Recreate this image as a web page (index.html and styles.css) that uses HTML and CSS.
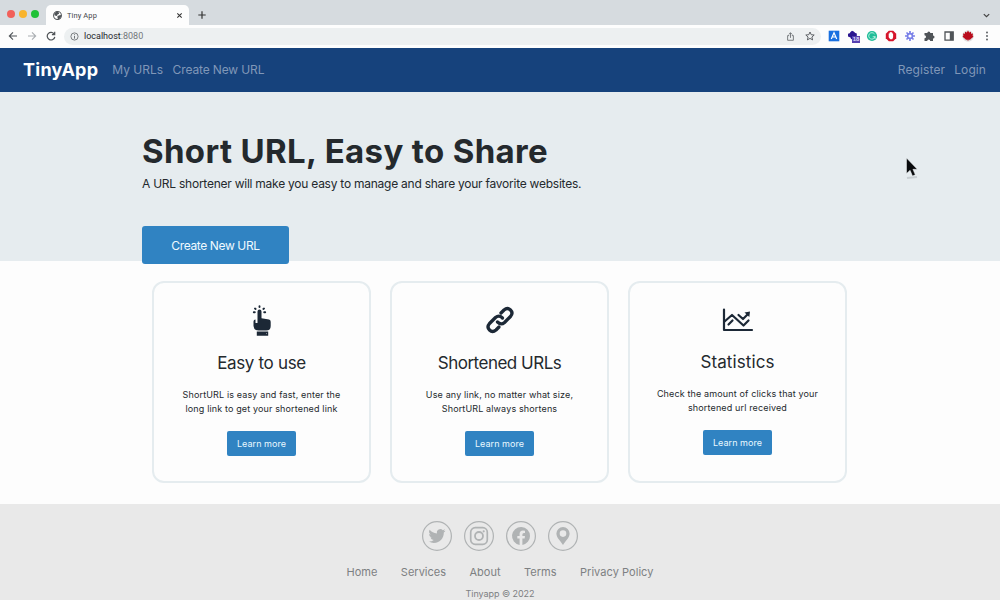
FILE: index.html
```
<!DOCTYPE html>
<html lang="en">
<head>
<meta charset="utf-8">
<title>Tiny App</title>
<link rel="stylesheet" href="styles.css">
</head>
<body>
<div class="tabstrip">
  <i class="light red"></i><i class="light yellow"></i><i class="light green"></i>
  <div class="tab">
    <svg class="globe" viewBox="0 0 16 16"><circle cx="8" cy="8" r="7" fill="#fff" stroke="#505458" stroke-width="1.8"/><path d="M2 5l4-4 4 1 1 3-3 1-1 3-4-1zM8 9l5-2 2 1-2 5-4 2-1-3z" fill="#505458"/></svg>
    <span class="tab-title">Tiny App</span>
    <svg class="close" viewBox="0 0 8 8"><path d="M1.5 1.5l5 5M6.5 1.5l-5 5" stroke="#333" stroke-width="1.2"/></svg>
  </div>
  <svg class="plus" viewBox="0 0 8 8"><path d="M4 .3v7.4M.3 4h7.4" stroke="#333" stroke-width="1.2"/></svg>
  <svg class="chevron" viewBox="0 0 8 8"><path d="M1.6 2.8L4 5.100l2.400-2.300" fill="none" stroke="#444" stroke-width="1.1"/></svg>
</div>
<div class="toolbar">
  <svg class="tool" viewBox="0 0 10 10"><path d="M9 5H1.5M5 1.3L1.3 5 5 8.7" fill="none" stroke="#505458" stroke-width="1.1"/></svg>
  <svg class="tool" viewBox="0 0 10 10"><path d="M1 5h7.5M5 1.3L8.7 5 5 8.7" fill="none" stroke="#aaaeb2" stroke-width="1.1"/></svg>
  <svg class="tool" viewBox="0 0 10 10"><path d="M8.3 3.2A3.8 3.8 0 1 0 8.8 5.8M8.7.8v2.8H5.9" fill="none" stroke="#505458" stroke-width="1.2"/></svg>
  <div class="address">
    <svg class="info" viewBox="0 0 10 10"><circle cx="5" cy="5" r="4" fill="none" stroke="#606468" stroke-width=".9"/><path d="M5 4.4v3M5 2.5v1" stroke="#606468"/></svg>
    <span class="host">localhost<span class="port">:8080</span></span>
    <svg class="share" viewBox="0 0 10 10"><path d="M3.5 4H1.8v5.2h6.4V4H6.5M5 6.5V1M3 2.8L5 .8l2 2" fill="none" stroke="#606468" stroke-width=".9"/></svg>
    <svg class="star" viewBox="0 0 10 10"><path d="M5 1l1.2 2.700 3 .3-2.300 2 .7 2.900L5 7.400 2.400 8.900 3.100 6 .8 4l3-.3z" fill="none" stroke="#505458" stroke-width=".9"/></svg>
  </div>
  <div class="extensions">
    <svg viewBox="0 0 12 12"><path fill="#1a70e0" d="M.7.7h10.6v10.6H.7z"/><path d="M3.3 9L6 2.8 8.7 9M4.2 7h3.6" fill="none" stroke="#fff" stroke-width="1.2"/></svg>
    <div class="badged"><svg viewBox="0 0 12 12"><path d="M5 .8l1.700.8L8.300 3l1.500.6v2.700L8 8 5.800 9.600 4 9l-.5-1.400L1 6.500V3.700l1.700-.5L3.500 2z" fill="#2b1790"/></svg><span class="badge">18</span></div>
    <svg viewBox="0 0 12 12"><circle cx="6" cy="6" r="5.1" fill="#20bd98"/><path d="M8.5 4A3.2 3.2 0 1 0 9 6.8H6.7M9 6v3" fill="none" stroke="#b4f0e0" stroke-width="1"/></svg>
    <svg viewBox="0 0 12 12"><path d="M3.8.8h4.4l3 3v4.4l-3 3H3.8l-3-3V3.800z" fill="#d51329"/><path d="M3.700 6V3.500h.8V2.500h.8V2h1.200v.6h.8v1h.8v3.700L7.300 9.300H5.200L3.700 7.300z" fill="#fff"/></svg>
    <svg viewBox="0 0 12 12"><path d="M6 1v10M1 6h10M2.500 2.500l7 7M9.500 2.500l-7 7" stroke="#7a80e8" stroke-width="1.700"/><circle cx="6" cy="6" r="3.300" fill="#7a80e8"/><circle cx="6" cy="6" r="1.600" fill="#fff"/></svg>
    <svg viewBox="0 0 12 12"><path d="M1.500 3h2.800a1.500 1.500 0 1 1 3 0H10v2.500a1.500 1.500 0 1 1 0 3V11H7.200a1.500 1.500 0 0 0-3 0H1.500V8.200a1.500 1.500 0 0 0 0-3z" fill="#505458"/></svg>
    <svg viewBox="0 0 12 12"><path d="M2 2h8.200v8.200H2z" fill="none" stroke="#505458" stroke-width="1.300"/><path d="M6.800 2h3.400v8.200H6.800z" fill="#505458"/></svg>
    <svg viewBox="0 0 12 12"><circle cx="6" cy="6" r="5.800" fill="#dedede"/><path d="M6 .6l1.200 2 1.800-.8v2L11 3.500l-.4 2 .8 1.200L9 8.700 8 9.800H6.300V11h-.6V9.800H4L3 8.700.600 6.700l.8-1.200-.4-2 2 .3v-2l1.800.8z" fill="#b90c1c"/></svg>
    <svg viewBox="0 0 12 12"><g fill="#505458"><circle cx="6" cy="2.500" r=".9"/><circle cx="6" cy="6" r=".9"/><circle cx="6" cy="9.500" r=".9"/></g></svg>
  </div>
</div>
<nav class="navbar">
  <a class="brand">TinyApp</a><a class="my-urls">My URLs</a><a class="create">Create New URL</a>
  <a class="register">Register</a><a class="login">Login</a>
</nav>
<header class="hero">
  <h1>Short URL, Easy to Share</h1>
  <p>A URL shortener will make you easy to manage and share your favorite websites.</p>
  <a class="cta">Create New URL</a>
</header>
<main class="cards">
  <section class="card easy">
    <svg class="icon" viewBox="0 0 32 32"><path fill="#1c2836" d="M11.500 7.500a2 2 0 0 1 4 0v6.800l7.500 1.200q1.700.4 1.700 2.200v4.300q0 4.500-4.500 4.500h-7.700q-4.500 0-5-4.500v-4.500q0-1.700 2-1.900V19h2zM10.800 27.500h11.400v4.200H10.800z"/><path d="M20 29.600h.6" stroke="#fff" stroke-width=".8"/><path d="M7.800 8.300h1M9 4.500l.6.5M13.500 2.300v.8M18 4.500l-.6.5M19.200 8.300h-1" stroke="#1c2836" stroke-width="1.900" stroke-linecap="round"/></svg>
    <h2>Easy to use</h2>
    <p>ShortURL is easy and fast, enter the<br>long link to get your shortened link</p>
    <a class="more">Learn more</a>
  </section>
  <section class="card short">
    <svg class="icon" viewBox="0 0 32 32"><g fill="none" stroke="#1c2836" stroke-width="3.300" stroke-linecap="round" stroke-linejoin="round"><path d="M17 9l3-3q3.500-3 6.500 0t0 6.500l-6 6q-3.500 3-7-.5"/><path d="M15 23l-3 3q-3.500 3-6.500 0t0-6.500l6-6q3.500-3 7 .5"/></g></svg>
    <h2>Shortened URLs</h2>
    <p>Use any link, no matter what size,<br>ShortURL always shortens</p>
    <a class="more">Learn more</a>
  </section>
  <section class="card stats">
    <svg class="icon" viewBox="0 0 32 32"><g fill="none" stroke="#1c2836" stroke-width="2.200" stroke-linecap="round" stroke-linejoin="round"><path d="M2 5.500v20.500h28"/><path d="M2.500 17.500l7.500-6.500 11.500 10.500 5-5M6.500 20.500l4-4M16.500 11l4.500 4 5-5"/></g><path d="M22.500 8.500l5.500-1-.7 5.500z" fill="#1c2836"/></svg>
    <h2>Statistics</h2>
    <p>Check the amount of clicks that your<br>shortened url received</p>
    <a class="more">Learn more</a>
  </section>
</main>
<footer class="footer">
  <div class="social">
    <svg viewBox="0 0 30 30"><circle cx="15" cy="15" r="14.400"/><path class="solid" transform="translate(6.500 6.500) scale(.71)" d="M23.950 4.570a10 10 0 0 1-2.820.780 4.960 4.960 0 0 0 2.160-2.720c-.95.550-2 .96-3.130 1.180a4.920 4.920 0 0 0-8.380 4.480C7.690 8.100 4.070 6.130 1.640 3.160a4.920 4.920 0 0 0 1.520 6.570 4.900 4.900 0 0 1-2.230-.61v.06a4.920 4.920 0 0 0 3.950 4.830 5 5 0 0 1-2.210.080 4.940 4.940 0 0 0 4.600 3.420A9.870 9.870 0 0 1 0 19.540a14 14 0 0 0 7.550 2.210c9.050 0 14-7.500 14-13.980v-.64a9.900 9.900 0 0 0 2.400-2.560z"/></svg>
    <svg viewBox="0 0 30 30"><circle cx="15" cy="15" r="14.400"/><rect x="6.700" y="6.700" width="16.600" height="16.600" rx="4.500" stroke-width="1.700"/><circle cx="15" cy="15" r="4" stroke-width="1.800"/><circle class="solid" cx="19.700" cy="10.300" r="1.100"/></svg>
    <svg viewBox="0 0 30 30"><circle cx="15" cy="15" r="14.400"/><path class="solid" d="M24 15a9 9 0 1 0-10.400 8.900v-6.300h-2.300V15h2.300v-2q0-3.500 3.400-3.500l2 .2V12h-1.100q-1.500 0-1.500 1.500V15H19l-.4 2.600h-2.200v6.300A9 9 0 0 0 24 15z"/></svg>
    <svg viewBox="0 0 30 30"><circle cx="15" cy="15" r="14.400"/><path class="solid" fill-rule="evenodd" d="M15 6a6.600 6.600 0 0 1 6.600 6.600c0 4.300-4 7.200-6.600 11.400-2.600-4.200-6.600-7.100-6.600-11.400A6.600 6.600 0 0 1 15 6zm0 3.300a3.300 3.300 0 1 0 0 6.600 3.300 3.300 0 0 0 0-6.600z"/></svg>
  </div>
  <div class="links"><a>Home</a><a>Services</a><a>About</a><a>Terms</a><a class="privacy">Privacy Policy</a></div>
  <div class="copyright">Tinyapp © 2022</div>
</footer>
<svg class="cursor" viewBox="0 0 14 24"><path d="M2 21l10-1" stroke="#aeb4b8" stroke-width="2" opacity=".5"/><path d="M1.500 1v15.500l3.600-3.200 2.400 5.700 2.800-1.200L7.900 12.300h4.400z" fill="#090b0d" stroke="#eef3f5" stroke-width=".5"/></svg>
</body>
</html>
```
FILE: styles.css
```
* { box-sizing: border-box; }
body { margin: 0; width: 1000px; height: 600px; overflow: hidden; background: #fdfdfd; color: #24292d; font-family: Inter, "Liberation Sans", sans-serif; white-space: nowrap; }
svg { display: block; flex: none; }
h1, h2, p { margin: 0; }
.tabstrip { height: 25px; background: #d6dbdf; display: flex; align-items: center; }
.light { width: 8px; height: 8px; border-radius: 50%; margin: 2px 4px 0 0; }
.red { background: #f2605a; margin-left: 7px; }
.yellow { background: #f9b42d; }
.green { background: #20c137; margin-right: 7px; }
.tab { width: 143px; height: 20px; margin-top: 5px; background: #fdfdfd; border-radius: 5px 5px 0 0; display: flex; align-items: center; padding: 0 6px 0 7px; }
.globe { width: 9px; height: 9px; margin-right: 5px; }
.tab-title { font: 7.5px Roboto, sans-serif; flex: 1; color: #44484c; letter-spacing: .1px; }
.close { width: 7px; height: 7px; }
.plus { width: 8px; height: 8px; margin: 5px 0 0 9px; }
.chevron { width: 9px; height: 9px; margin: 5px 9px 0 auto; }
.toolbar { height: 22.500px; background: #fdfdfd; display: flex; align-items: center; padding-left: 8px; }
.tool { width: 10px; height: 10px; margin-right: 9px; }
.address { width: 757px; height: 17px; background: #edf0f1; border-radius: 9px; display: flex; align-items: center; padding: 0 6px; margin-left: -1px; }
.info { width: 9px; height: 9px; margin-right: 5px; }
.host { font: 9px Roboto, sans-serif; color: #25292d; flex: 1; }
.port { color: #73777b; }
.share { width: 9px; height: 9px; margin-right: 10px; }
.star { width: 10px; height: 10px; }
.extensions { display: flex; gap: 7.100px; margin-left: 7px; }
.extensions svg { width: 12px; height: 12px; }
.badged { position: relative; }
.badge { position: absolute; left: 5px; top: 6px; width: 8px; height: 7px; font: bold 6px/7px "Liberation Sans", sans-serif; text-align: center; color: #ddd8f6; background: #5640b0; }
.navbar { height: 44.500px; background: #16427c; color: #8097b8; display: flex; align-items: center; padding: 0 14px 1px 23px; font-size: 12px; }
.brand { color: #fff; font-weight: 700; font-size: 18px; margin-right: 14px; letter-spacing: .25px; }
.my-urls { margin-right: 9.500px; }
.create { letter-spacing: -.13px; }
.register { margin-left: auto; margin-right: 9px; letter-spacing: .12px; }
.login { letter-spacing: .08px; }
.hero { height: 169px; background: #e6ecef; padding: 37px 142px 0; }
.hero h1 { font-size: 33px; line-height: 44px; font-weight: 700; letter-spacing: .36px; }
.hero p { font-size: 12px; line-height: 22px; letter-spacing: -.245px; }
.cta { display: flex; justify-content: center; align-items: center; width: 147px; height: 38px; margin-top: 31px; border-radius: 3px; background: #3083c2; color: #eff9ff; font-size: 12px; letter-spacing: -.37px; }
.cards { height: 243px; padding: 20px 0 0 152px; display: flex; gap: 19px; }
.card { width: 219px; height: 202px; border: 2px solid #e5ecef; border-radius: 12px; display: flex; flex-direction: column; align-items: center; padding-top: 21px; }
.short, .stats { padding-top: 20.500px; }
.icon { width: 32px; height: 32px; }
.card h2 { font-size: 17px; line-height: 26px; font-weight: 400; margin-top: 14px; }
.easy h2 { letter-spacing: -.33px; }
.short h2 { letter-spacing: -.5px; }
.stats h2 { margin-top: 13.500px; letter-spacing: .1px; }
.card p { font-size: 9px; line-height: 14px; text-align: center; margin-top: 12px; letter-spacing: .14px; }
.more { width: 69px; height: 25px; line-height: 25px; text-align: center; font-size: 9px; background: #3083c2; border-radius: 2px; color: #e9f8ff; margin-top: 15px; letter-spacing: .05px; }
.footer { height: 96px; background: #e9e9e9; padding-top: 17px; color: #7d8082; text-align: center; }
.social { display: flex; justify-content: center; gap: 11.700px; }
.social svg { width: 30px; height: 30px; fill: none; stroke: #b0b3b4; stroke-width: 1.200; }
.social .solid { fill: #b0b3b4; stroke: none; }
.links { display: flex; justify-content: center; gap: 23.500px; font-size: 11px; line-height: 18px; margin-top: 12px; }
.privacy { letter-spacing: .05px; }
.copyright { font-size: 9px; line-height: 12px; margin-top: 7px; letter-spacing: -.05px; }
.cursor { position: absolute; left: 905px; top: 157px; width: 14px; height: 24px; }
```
